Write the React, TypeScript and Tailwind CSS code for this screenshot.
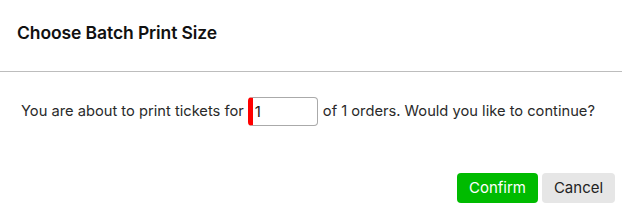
import React from "react";

export default function App() {
  return (
    <div className="w-[622px] h-[210px] bg-white text-[#1a1a1a]" style={{ fontFamily: "Inter, 'Noto Sans', sans-serif" }}>
      <div className="h-[72px] flex items-center px-[17px] pb-[5px] border-b border-[#bdbdbd]">
        <h1 className="text-[17.5px] font-semibold tracking-[-0.1px] text-[#111]">Choose Batch Print Size</h1>
      </div>
      <div className="h-[78px] flex items-center pl-[21px] text-[14.7px] text-[#2a2a2a]">
        <span>You are about to print tickets for</span>
        <input
          defaultValue="1"
          className="ml-[4px] w-[70px] h-[29px] rounded-[4px] border border-[#aaa] border-l-[5px] border-l-[#ff0000] pl-[2px] text-[15px] text-[#222] outline-none"
        />
        <span className="ml-[5px]">of 1 orders. Would you like to continue?</span>
      </div>
      <div className="flex justify-end gap-[4px] pr-[7px] pt-[23px]">
        <button className="h-[30px] w-[81px] rounded-[4px] bg-[#00bb00] text-white text-[15px]">Confirm</button>
        <button className="h-[30px] w-[73px] rounded-[4px] bg-[#e6e6e6] text-[#222] text-[15px]">Cancel</button>
      </div>
    </div>
  );
}
